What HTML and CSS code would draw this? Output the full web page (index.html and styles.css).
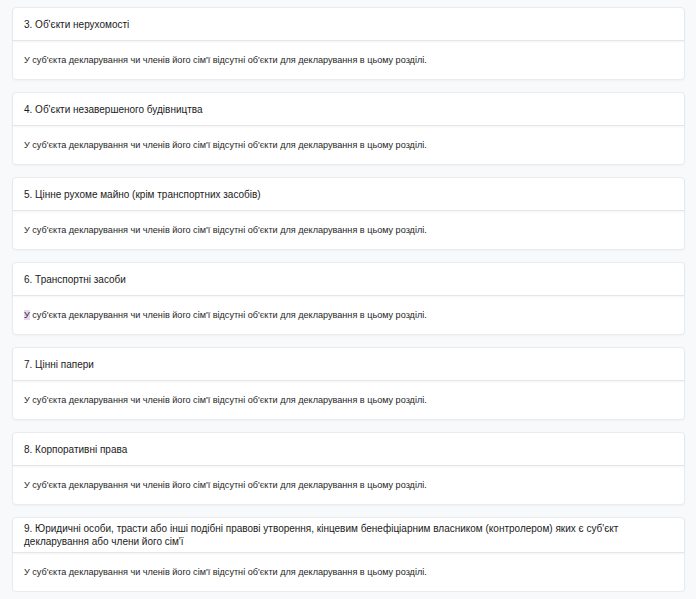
FILE: index.html
```html
<!DOCTYPE html>
<html lang="uk">
<head>
<meta charset="utf-8">
<link rel="stylesheet" href="styles.css">
</head>
<body>
<div class="list">
  <section class="card">
    <div class="card-head">3. Об'єкти нерухомості</div>
    <div class="card-body">У суб'єкта декларування чи членів його сім'ї відсутні об'єкти для декларування в цьому розділі.</div>
  </section>
  <section class="card">
    <div class="card-head">4. Об'єкти незавершеного будівництва</div>
    <div class="card-body">У суб'єкта декларування чи членів його сім'ї відсутні об'єкти для декларування в цьому розділі.</div>
  </section>
  <section class="card">
    <div class="card-head">5. Цінне рухоме майно (крім транспортних засобів)</div>
    <div class="card-body">У суб'єкта декларування чи членів його сім'ї відсутні об'єкти для декларування в цьому розділі.</div>
  </section>
  <section class="card">
    <div class="card-head">6. Транспортні засоби</div>
    <div class="card-body"><span class="sel">У</span> суб'єкта декларування чи членів його сім'ї відсутні об'єкти для декларування в цьому розділі.</div>
  </section>
  <section class="card">
    <div class="card-head">7. Цінні папери</div>
    <div class="card-body">У суб'єкта декларування чи членів його сім'ї відсутні об'єкти для декларування в цьому розділі.</div>
  </section>
  <section class="card">
    <div class="card-head">8. Корпоративні права</div>
    <div class="card-body">У суб'єкта декларування чи членів його сім'ї відсутні об'єкти для декларування в цьому розділі.</div>
  </section>
  <section class="card">
    <div class="card-head">9. Юридичні особи, трасти або інші подібні правові утворення, кінцевим бенефіціарним власником (контролером) яких є суб'єкт декларування або члени його сім'ї</div>
    <div class="card-body">У суб'єкта декларування чи членів його сім'ї відсутні об'єкти для декларування в цьому розділі.</div>
  </section>
</div>
</body>
</html>
```

FILE: styles.css
```css
html, body {
  margin: 0;
  padding: 0;
  background: #f8f9fb;
}
body {
  font-family: "Liberation Sans", Arial, sans-serif;
  color: #222;
}
.list {
  display: flex;
  flex-direction: column;
  gap: 12px;
  padding: 7px 11px 0 12px;
}
.card {
  background: #fff;
  border: 1px solid #e8ecf1;
  border-radius: 4px;
  box-shadow: 0 1px 2px rgba(30, 40, 60, 0.04);
}
.card-head {
  display: flex;
  align-items: center;
  min-height: 33px;
  box-sizing: border-box;
  padding: 4px 11px;
  font-size: 10px;
  line-height: 13px;
  color: #1a1a1a;
  border-bottom: 1px solid #e3e7ec;
  box-shadow: 0 1px 2px rgba(30, 40, 60, 0.05);
}
.card-body {
  padding: 14px 11px 13px;
  font-size: 9.1px;
  line-height: 11px;
  color: #262626;
}
.sel {
  background: #ead6f0;
}
```
